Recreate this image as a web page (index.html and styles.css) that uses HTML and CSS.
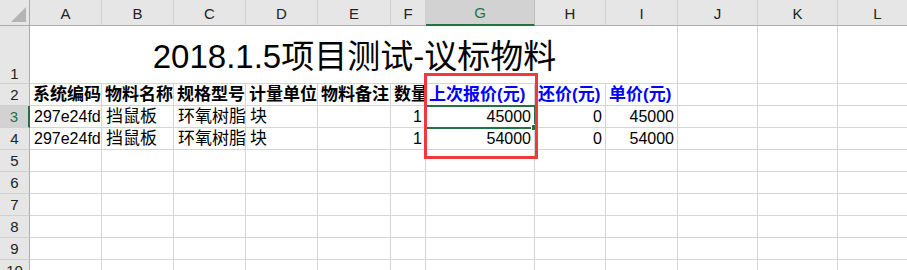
FILE: index.html
```html
<!DOCTYPE html>
<html>
<head>
<meta charset="utf-8">
<link rel="stylesheet" href="styles.css">
</head>
<body>
<div class="sheet">
  <div class="grid">
    <div class="corner"><span class="tri"></span></div>
    <div class="ch">A</div><div class="ch">B</div><div class="ch">C</div><div class="ch">D</div><div class="ch">E</div><div class="ch">F</div><div class="ch sel">G</div><div class="ch">H</div><div class="ch">I</div><div class="ch">J</div><div class="ch">K</div><div class="ch">L</div>

    <div class="rh bottom">1</div>
    <div class="c title">2018.1.5项目测试-议标物料</div>
    <div class="c"></div><div class="c"></div><div class="c"></div>

    <div class="rh">2</div>
    <div class="c b">系统编码</div><div class="c b">物料名称</div><div class="c b">规格型号</div><div class="c b">计量单位</div><div class="c b">物料备注</div><div class="c b">数量</div><div class="c b blue">上次报价(元)</div><div class="c b blue">还价(元)</div><div class="c b blue">单价(元)</div><div class="c"></div><div class="c"></div><div class="c"></div>

    <div class="rh sel">3</div>
    <div class="c">297e24fd</div><div class="c z">挡鼠板</div><div class="c z">环氧树脂</div><div class="c z">块</div><div class="c"></div><div class="c r">1</div><div class="c r">45000</div><div class="c r">0</div><div class="c r">45000</div><div class="c"></div><div class="c"></div><div class="c"></div>

    <div class="rh">4</div>
    <div class="c">297e24fd</div><div class="c z">挡鼠板</div><div class="c z">环氧树脂</div><div class="c z">块</div><div class="c"></div><div class="c r">1</div><div class="c r">54000</div><div class="c r">0</div><div class="c r">54000</div><div class="c"></div><div class="c"></div><div class="c"></div>

    <div class="rh">5</div><div class="c"></div><div class="c"></div><div class="c"></div><div class="c"></div><div class="c"></div><div class="c"></div><div class="c"></div><div class="c"></div><div class="c"></div><div class="c"></div><div class="c"></div><div class="c"></div>
    <div class="rh">6</div><div class="c"></div><div class="c"></div><div class="c"></div><div class="c"></div><div class="c"></div><div class="c"></div><div class="c"></div><div class="c"></div><div class="c"></div><div class="c"></div><div class="c"></div><div class="c"></div>
    <div class="rh">7</div><div class="c"></div><div class="c"></div><div class="c"></div><div class="c"></div><div class="c"></div><div class="c"></div><div class="c"></div><div class="c"></div><div class="c"></div><div class="c"></div><div class="c"></div><div class="c"></div>
    <div class="rh">8</div><div class="c"></div><div class="c"></div><div class="c"></div><div class="c"></div><div class="c"></div><div class="c"></div><div class="c"></div><div class="c"></div><div class="c"></div><div class="c"></div><div class="c"></div><div class="c"></div>
    <div class="rh">9</div><div class="c"></div><div class="c"></div><div class="c"></div><div class="c"></div><div class="c"></div><div class="c"></div><div class="c"></div><div class="c"></div><div class="c"></div><div class="c"></div><div class="c"></div><div class="c"></div>
    <div class="rh">10</div><div class="c"></div><div class="c"></div><div class="c"></div><div class="c"></div><div class="c"></div><div class="c"></div><div class="c"></div><div class="c"></div><div class="c"></div><div class="c"></div><div class="c"></div><div class="c"></div>
  </div>
  <div class="selection"><span class="handle"></span></div>
  <div class="redbox"></div>
</div>
</body>
</html>
```

FILE: styles.css
```css
html, body {
  margin: 0;
  padding: 0;
  background: #fff;
  overflow: hidden;
}
.sheet {
  position: relative;
  width: 907px;
  height: 270px;
  overflow: hidden;
  font-family: "Liberation Sans", "Noto Sans CJK SC", sans-serif;
  color: #000;
}
.grid {
  display: grid;
  grid-template-columns: 30px 72px 72px 72px 72px 73px 35px 109px 71px 72px 80px 80px 80px;
  grid-template-rows: 26px 58px repeat(9, 22px);
  width: 928px;
}
.corner {
  background: #e6e6e6;
  border-right: 1px solid #ababab;
  border-bottom: 1px solid #ababab;
  box-sizing: border-box;
  position: relative;
}
.tri {
  position: absolute;
  right: 3px;
  bottom: 3px;
  width: 0;
  height: 0;
  border-left: 15px solid transparent;
  border-bottom: 15px solid #b4b4b4;
}
.ch {
  background: #e6e6e6;
  border-right: 1px solid #d0d0d0;
  border-bottom: 1px solid #ababab;
  box-sizing: border-box;
  font-size: 15px;
  color: #222;
  display: flex;
  align-items: center;
  justify-content: center;
  padding-top: 1px;
}
.ch.sel {
  background: #d2d2d2;
  color: #217346;
  border-bottom: 2px solid #217346;
  border-right-color: #bdbdbd;
}
.rh {
  background: #e6e6e6;
  border-right: 1px solid #ababab;
  border-bottom: 1px solid #d0d0d0;
  box-sizing: border-box;
  font-size: 15px;
  color: #222;
  display: flex;
  align-items: center;
  justify-content: center;
}
.rh.bottom {
  align-items: flex-end;
  padding-bottom: 1px;
}
.rh.sel {
  background: #d2d2d2;
  color: #217346;
  border-right: 2px solid #217346;
}
.c {
  border-right: 1px solid #d4d4d4;
  border-bottom: 1px solid #d4d4d4;
  box-sizing: border-box;
  font-size: 16px;
  line-height: 20px;
  white-space: nowrap;
  overflow: visible;
  padding: 0 2px 0 4px;
  display: flex;
  align-items: flex-end;
}
.c.z {
  font-size: 17px;
}
.c.title {
  grid-column: span 9;
  justify-content: center;
  font-size: 33px;
  line-height: 40px;
  padding-bottom: 6px;
  overflow: visible;
}
.c.b {
  font-weight: bold;
  font-size: 17px;
  overflow: hidden;
  padding-left: 3px;
}
.c.blue {
  color: #0000ff;
}
.c.r {
  justify-content: flex-end;
  padding-right: 3px;
}
.selection {
  position: absolute;
  left: 425px;
  top: 105px;
  width: 111px;
  height: 24px;
  box-sizing: border-box;
  border: 2px solid #217346;
}
.handle {
  position: absolute;
  right: -4px;
  bottom: -4px;
  width: 5px;
  height: 5px;
  background: #217346;
  border: 1px solid #fff;
}
.redbox {
  position: absolute;
  left: 424px;
  top: 73px;
  width: 114px;
  height: 86px;
  box-sizing: border-box;
  border: 3px solid #f0393b;
}
```
